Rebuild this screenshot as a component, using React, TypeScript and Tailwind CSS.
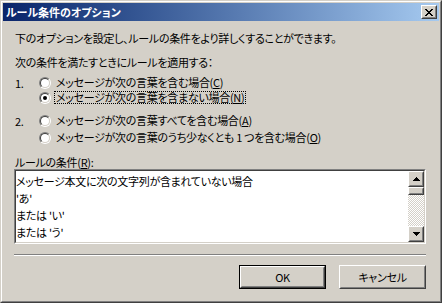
import React from "react";

const font = { fontFamily: '"Noto Sans CJK JP", "Noto Sans", sans-serif' };

function Radio({ checked }: { checked?: boolean }) {
  return (
    <div className="w-[12px] h-[12px] rounded-full border border-t-[#808080] border-l-[#808080] border-r-white border-b-white shrink-0">
      <div className="w-full h-full rounded-full border border-t-[#404040] border-l-[#404040] border-r-[#D4D0C8] border-b-[#D4D0C8] bg-white flex items-center justify-center">
        {checked && <div className="w-[4px] h-[4px] rounded-full bg-black" />}
      </div>
    </div>
  );
}

function Option({
  num,
  label,
  mnemonic,
  checked,
  focused,
  className,
}: {
  num?: string;
  label: string;
  mnemonic: string;
  checked?: boolean;
  focused?: boolean;
  className?: string;
}) {
  return (
    <div className={"flex items-center h-[15px] " + (className ?? "")}>
      <span className="w-[24px] shrink-0 leading-[12px]">{num}</span>
      <Radio checked={checked} />
      <span
        className={
          "ml-[3px] px-[1px] leading-[11px] border border-dotted " +
          (focused ? "border-black" : "border-transparent")
        }
      >
        {label}(<span className="underline">{mnemonic}</span>)
      </span>
    </div>
  );
}

function Bevel({ children, className }: { children?: React.ReactNode; className?: string }) {
  return (
    <div className={"border border-t-white border-l-white border-r-[#404040] border-b-[#404040] " + (className ?? "")}>
      <div className="w-full h-full border border-t-[#D4D0C8] border-l-[#D4D0C8] border-r-[#808080] border-b-[#808080] bg-[#D4D0C8] flex items-center justify-center">
        {children}
      </div>
    </div>
  );
}

function Arrow({ up }: { up?: boolean }) {
  return (
    <svg width="7" height="4" viewBox="0 0 7 4" shapeRendering="crispEdges">
      {up ? (
        <path d="M3 0h1v1h1v1h1v1h1v1H0V3h1V2h1V1h1z" fill="#000" />
      ) : (
        <path d="M0 0h7v1H6v1H5v1H4v1H3V3H2V2H1V1H0z" fill="#000" />
      )}
    </svg>
  );
}

export default function App() {
  return (
    <div
      className="w-[442px] h-[303px] border border-t-[#D4D0C8] border-l-[#D4D0C8] border-r-[#404040] border-b-[#404040] text-[11px] tracking-[-0.3px] text-black select-none"
      style={{ ...font, fontFeatureSettings: '"palt"' }}
    >
      <div className="w-full h-full border border-t-white border-l-white border-r-[#808080] border-b-[#808080] bg-[#D4D0C8] p-[1px] flex flex-col">
        {/* title bar */}
        <div className="h-[18px] bg-gradient-to-r from-[#0A246A] to-[#A6CAF0] flex items-center pl-[3px] pr-[2px]">
          <span className="text-white font-bold text-[11px] tracking-normal leading-none">ルール条件のオプション</span>
          <Bevel className="ml-auto w-[16px] h-[14px]">
            <svg width="8" height="7" viewBox="0 0 8 7" shapeRendering="crispEdges">
              <path
                d="M0 0h2v1h1v1h2V1h1V0h2v1H7v1H6v1H5v1h1v1h1v1h1v1H6V6H5V5H3v1H2v1H0V6h1V5h1V4h1V3H2V2H1V1H0z"
                fill="#000"
              />
            </svg>
          </Bevel>
        </div>

        {/* body */}
        <div className="flex flex-col pl-[12px] pr-[13px]">
          <div className="mt-[9px] h-[16px] flex items-center">
            下のオプションを設定し、ルールの条件をより詳しくすることができます。
          </div>
          <div className="mt-[8px] h-[16px] flex items-center">次の条件を満たすときにルールを適用する：</div>

          <Option className="mt-[5px]" num="1." label="メッセージが次の言葉を含む場合" mnemonic="C" />
          <Option label="メッセージが次の言葉を含まない場合" mnemonic="N" checked focused />
          <Option className="mt-[8px]" num="2." label="メッセージが次の言葉すべてを含む場合" mnemonic="A" />
          <Option className="mt-[2px]" label="メッセージが次の言葉のうち少なくとも 1 つを含む場合" mnemonic="O" />

          <div className="mt-[10px] h-[14px] flex items-center">
            ルールの条件(<span className="underline">R</span>):
          </div>

          {/* list box */}
          <div className="-ml-[1px] h-[75px] border border-t-[#808080] border-l-[#808080] border-r-white border-b-white">
            <div className="w-full h-full border border-t-[#404040] border-l-[#404040] border-r-[#D4D0C8] border-b-[#D4D0C8] bg-white flex">
              <div className="flex-1 pt-[2px] leading-[17px] overflow-hidden">
                <div>メッセージ本文に次の文字列が含まれていない場合</div>
                <div>'あ'</div>
                <div>または 'い'</div>
                <div>または 'う'</div>
              </div>
              <div className="w-[16px] flex flex-col">
                <Bevel className="h-[16px]">
                  <Arrow up />
                </Bevel>
                <Bevel className="h-[8px]" />
                <div className="flex-1 bg-[repeating-conic-gradient(#ffffff_0_25%,#D4D0C8_0_50%)] bg-[length:2px_2px]" />
                <Bevel className="h-[16px]">
                  <Arrow />
                </Bevel>
              </div>
            </div>
          </div>

          {/* separator */}
          <div className="-ml-[1px] mt-[10px] border-t border-t-[#808080] border-b border-b-white" />

          {/* buttons */}
          <div className="mt-[9px] flex justify-end gap-[13px]">
            <div className="border border-black">
              <Bevel className="w-[85px] h-[22px]">OK</Bevel>
            </div>
            <Bevel className="w-[87px] h-[24px]">キャンセル</Bevel>
          </div>
        </div>
      </div>
    </div>
  );
}
